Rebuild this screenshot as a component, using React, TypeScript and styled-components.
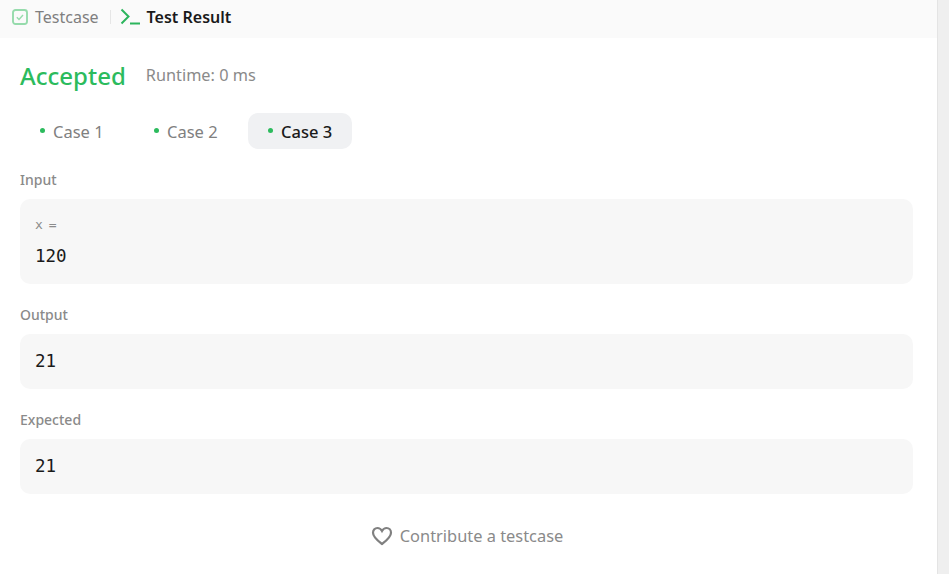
import { FC } from 'react';
import styled, { createGlobalStyle } from 'styled-components';

const GlobalStyle = createGlobalStyle`
  html, body {
    margin: 0;
    height: 100%;
    overflow: hidden;
    background: #ffffff;
    font-family: "Noto Sans", "Open Sans", sans-serif;
  }
`

const Page = styled.div`
  display: flex;
  height: 574px;
`

const Main = styled.div`
  flex: 1;
  min-width: 0;
`

const Scrollbar = styled.div`
  width: 12px;
  background: #efefef;
  border-left: 1px solid #e4e4e4;
  box-sizing: border-box;
`

const TabBar = styled.div`
  display: flex;
  align-items: center;
  height: 38px;
  padding: 0 0 5px 12px;
  box-sizing: border-box;
  background: #fafafa;
`

const TabLabel = styled.span<{ $active?: boolean }>`
  font-size: 16px;
  line-height: 24px;
  color: ${(p) => (p.$active ? '#1a1a1a' : '#7f7f7f')};
  font-weight: ${(p) => (p.$active ? 600 : 400)};
`

const CheckIcon = styled.svg`
  width: 16px;
  height: 16px;
  margin-right: 7px;
`

const Divider = styled.div`
  width: 1px;
  height: 14px;
  margin: 0 9px 0 11px;
  background: #e6e6e6;
`

const TerminalIcon = styled.svg`
  width: 20px;
  height: 18px;
  margin-right: 7px;
`

const Body = styled.div`
  padding: 0 24px 0 20px;
`

const StatusRow = styled.div`
  display: flex;
  align-items: center;
  gap: 20px;
  height: 75px;
  box-sizing: border-box;
`

const Status = styled.span`
  font-size: 24px;
  line-height: 40px;
  font-weight: 500;
  color: #2cbb5d;
`

const Runtime = styled.span`
  margin-bottom: 1px;
  font-size: 16.3px;
  line-height: 24px;
  color: #8a8a8a;
`

const CaseRow = styled.div`
  display: flex;
  gap: 10px;
  height: 36px;
`

const CaseTab = styled.div<{ $active?: boolean }>`
  display: flex;
  align-items: center;
  gap: 8px;
  width: 104px;
  padding-left: 20px;
  box-sizing: border-box;
  border-radius: 10px;
  font-size: 16.5px;
  font-weight: ${(p) => (p.$active ? 500 : 400)};
  background: ${(p) => (p.$active ? '#f0f1f3' : 'transparent')};
  color: ${(p) => (p.$active ? '#1a1a1a' : '#808080')};
`

const Dot = styled.span`
  width: 5px;
  height: 5px;
  margin-bottom: 2px;
  border-radius: 50%;
  background: #2cbb5d;
`

const Section = styled.div`
  margin-top: 21px;
`

const SectionLabel = styled.div`
  height: 20px;
  margin-bottom: 9px;
  font-size: 14px;
  line-height: 20px;
  font-weight: 500;
  color: #8a8a8a;
`

const ValueBox = styled.div`
  padding: 15px;
  border-radius: 10px;
  background: #f7f7f7;
  font-family: "DejaVu Sans Mono", "Liberation Mono", monospace;
`

const VarName = styled.div`
  height: 22px;
  margin-bottom: 8px;
  font-size: 13px;
  letter-spacing: -1px;
  line-height: 22px;
  color: #8c8c8c;
`

const Value = styled.div`
  height: 25px;
  font-size: 17.5px;
  line-height: 25px;
  color: #1a1a1a;
`

const Contribute = styled.div`
  display: flex;
  justify-content: center;
  align-items: center;
  gap: 7px;
  margin-top: 29px;
  padding-left: 1px;
  font-size: 16.4px;
  line-height: 26px;
  color: #8a8a8a;
`

const HeartIcon = styled.svg`
  width: 22px;
  height: 20px;
`

const App: FC = () => {
  const cases = ['Case 1', 'Case 2', 'Case 3'];

  return (
    <>
      <GlobalStyle />
      <Page>
        <Main>
          <TabBar>
            <CheckIcon viewBox="0 0 16 16" fill="none">
              <rect x="1" y="1" width="14" height="14" rx="2.5" stroke="#96dbac" strokeWidth="1.9" />
              <path d="M4.8 8.2l2.2 2.2 4-4.4" stroke="#96dbac" strokeWidth="1.4" />
            </CheckIcon>
            <TabLabel>Testcase</TabLabel>
            <Divider />
            <TerminalIcon viewBox="0 0 20 18" fill="none">
              <path d="M1.5 1.5L8.5 8.5L1.5 15.5" stroke="#2cb55d" strokeWidth="2" />
              <path d="M10 15.5H20" stroke="#2cb55d" strokeWidth="2" />
            </TerminalIcon>
            <TabLabel $active>Test Result</TabLabel>
          </TabBar>
          <Body>
            <StatusRow>
              <Status>Accepted</Status>
              <Runtime>Runtime: 0 ms</Runtime>
            </StatusRow>
            <CaseRow>
              {cases.map((name) => (
                <CaseTab key={name} $active={name === 'Case 3'}>
                  <Dot />
                  {name}
                </CaseTab>
              ))}
            </CaseRow>
            <Section>
              <SectionLabel>Input</SectionLabel>
              <ValueBox>
                <VarName>x =</VarName>
                <Value>120</Value>
              </ValueBox>
            </Section>
            <Section>
              <SectionLabel>Output</SectionLabel>
              <ValueBox>
                <Value>21</Value>
              </ValueBox>
            </Section>
            <Section>
              <SectionLabel>Expected</SectionLabel>
              <ValueBox>
                <Value>21</Value>
              </ValueBox>
            </Section>
            <Contribute>
              <HeartIcon viewBox="0 0 22 20" fill="none">
                <path
                  d="M11 18C5 13.6 2 10.6 2 6.8C2 3.9 4 2 6.4 2C8.2 2 9.9 3 11 5C12.1 3 13.8 2 15.6 2C18 2 20 3.9 20 6.8C20 10.6 17 13.6 11 18Z"
                  stroke="#808080"
                  strokeWidth="2.2"
                />
              </HeartIcon>
              Contribute a testcase
            </Contribute>
          </Body>
        </Main>
        <Scrollbar />
      </Page>
    </>
  )
}

export default App;
